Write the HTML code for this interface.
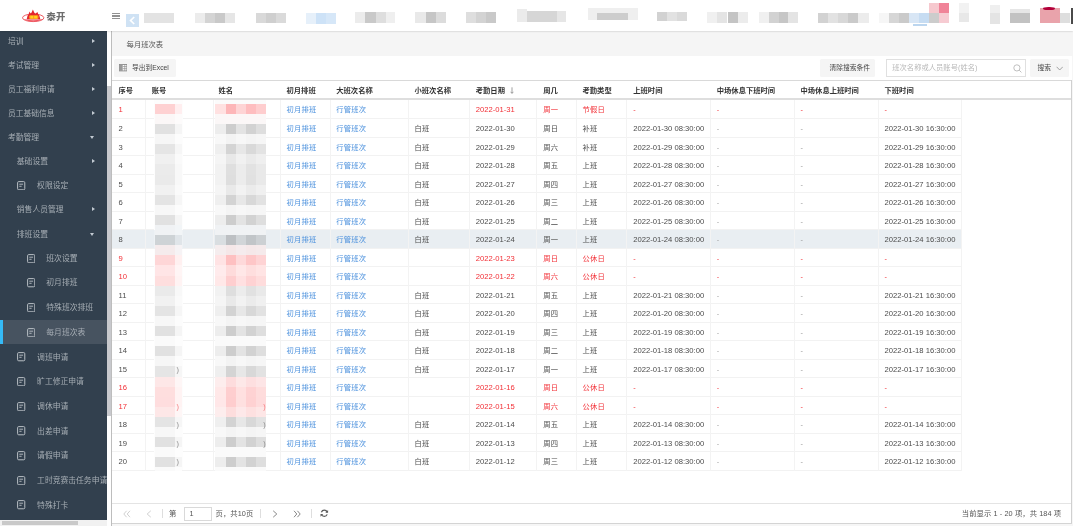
<!DOCTYPE html>
<html lang="zh-CN"><head><meta charset="utf-8"><title>每月班次表</title>
<style>
*{box-sizing:border-box;margin:0;padding:0}
html,body{width:1073px;height:526px;overflow:hidden;background:#f6f6f6;font-family:"Liberation Sans","Noto Sans CJK SC",sans-serif;}
.abs{position:absolute}
#hdr{position:absolute;left:0;top:0;width:1073px;height:31px;background:#fff;box-shadow:0 0 2px rgba(0,0,0,.25);z-index:5}
#side{position:absolute;left:0;top:31px;width:106.6px;height:488.5px;background:#32404e;overflow:hidden}
.mi{position:absolute;left:0;width:107px;height:24px;color:#a6adb4;font-size:7.8px;line-height:24px;white-space:nowrap}
.mi span{position:absolute;top:1.1px}
.mi svg{position:absolute;top:7.8px}
.ar{position:absolute;width:0;height:0}
.ar.r{left:92px;top:10.2px;border-left:3.5px solid #c2cad2;border-top:2.8px solid transparent;border-bottom:2.8px solid transparent}
.ar.d{left:90.3px;top:11.2px;border-top:3.4px solid #c2cad2;border-left:2.9px solid transparent;border-right:2.9px solid transparent}
#tabbar{position:absolute;left:112px;top:31px;width:961px;height:25px;background:#f5f5f5}
#main{position:absolute;left:111.5px;top:56px;width:960px;height:467.5px;background:#fff}
.btn{position:absolute;top:59.1px;height:17.5px;background:#f5f5f5;border-radius:1.5px;color:#464646;font-size:6.75px;line-height:18.7px;white-space:nowrap}
.th{position:absolute;top:82.2px;height:18px;line-height:18px;font-size:7.3px;font-weight:bold;color:#333;white-space:nowrap}
.row{position:absolute;left:112px;width:850px;height:18.52px;border-bottom:1px solid #f2f2f2;}
.row.hl{background:#e9eef2;width:850px}
.c{position:absolute;top:0;height:18.52px;line-height:20.3px;font-size:7.3px;color:#4c4c4c;white-space:nowrap;letter-spacing:.22px}
.c.n{font-size:7.65px;letter-spacing:0}
.red .c{color:#f22f36}
.c.lk{color:#4a90dd}
.c.ds{color:#9a9a9a}
.red .c.ds{color:#f22f36}
.vl{position:absolute;top:99.5px;width:1px;height:371.4px;background:#f3f3f3}
.pg{position:absolute;font-size:7.3px;color:#555;line-height:12px;white-space:nowrap;letter-spacing:.1px}
.bl{position:absolute}
</style></head><body><div id="all" style="position:absolute;left:0;top:0;width:1073px;height:526px;overflow:hidden;filter:blur(.35px);will-change:transform">

<div id="hdr">
<svg class="abs" style="left:21px;top:8px" width="25" height="15" viewBox="0 0 25 15">
<ellipse cx="12.2" cy="9.8" rx="10.7" ry="3.8" fill="#fff" stroke="#e8323a" stroke-width="0.8"/>
<path d="M5.6 11.6 L6.6 7.6 L7.6 6.4 L8.5 3.6 L9.6 5.6 L10.6 4.6 L11.9 1.6 L13.2 4.6 L14.4 5.8 L16.4 3.9 L17.4 6.6 L18.4 7.8 L19.4 11.6 Z" fill="#e3262d"/>
<rect x="8.2" y="7.3" width="9.2" height="3.6" rx="1" fill="#ff9d1c"/>
<rect x="9.4" y="7.9" width="2.6" height="2.4" fill="#ffd21f"/><rect x="13.2" y="7.9" width="2.8" height="2.4" fill="#ffd21f"/>
<path d="M2.6 11.4 Q12.2 15.4 21.8 11.4 L20.4 11.2 Q12.2 13.2 4 11.2 Z" fill="#ee5560"/>
</svg>
<div class="abs" style="left:46.6px;top:10.9px;font-size:9.3px;line-height:13px;font-weight:900;color:#6e6e6e;letter-spacing:0">泰开</div>
<div class="abs" style="left:112.3px;top:12.5px;width:7.5px;height:1.2px;background:#929292"></div>
<div class="abs" style="left:112.3px;top:15.4px;width:7.5px;height:1.2px;background:#929292"></div>
<div class="abs" style="left:112.3px;top:18.3px;width:7.5px;height:1.2px;background:#929292"></div>
<div class="abs" style="left:126px;top:14px;width:13px;height:13px;background:#cfe2f4"></div>
<svg class="abs" style="left:126px;top:14px" width="13" height="13" viewBox="0 0 13 13"><path d="M8.2 3 L4.6 6.5 L8.2 10" fill="none" stroke="#fff" stroke-width="1.7"/></svg>
<div style="filter:blur(.7px)">
<div class="bl" style="left:143.5px;top:12.5px;width:30.5px;height:10.0px;background:#e3e3e3;"></div>
<div class="bl" style="left:195.0px;top:12.5px;width:10.0px;height:10.0px;background:#ececec;"></div>
<div class="bl" style="left:205.0px;top:12.5px;width:10.0px;height:10.0px;background:#d4d4d4;"></div>
<div class="bl" style="left:215.0px;top:12.5px;width:10.0px;height:10.0px;background:#c9c9c9;"></div>
<div class="bl" style="left:225.0px;top:12.5px;width:10.0px;height:10.0px;background:#e6e6e6;"></div>
<div class="bl" style="left:255.5px;top:12.5px;width:10.0px;height:10.0px;background:#d9d9d9;"></div>
<div class="bl" style="left:265.5px;top:12.5px;width:10.0px;height:10.0px;background:#cfcfcf;"></div>
<div class="bl" style="left:275.5px;top:12.5px;width:10.0px;height:10.0px;background:#dadada;"></div>
<div class="bl" style="left:305.5px;top:12.5px;width:10.0px;height:11.0px;background:#e6f0fa;"></div>
<div class="bl" style="left:315.5px;top:12.5px;width:10.0px;height:11.0px;background:#cde2f7;"></div>
<div class="bl" style="left:325.5px;top:12.5px;width:10.0px;height:11.0px;background:#d6e7f8;"></div>
<div class="bl" style="left:355.0px;top:12.0px;width:10.0px;height:11.0px;background:#ececec;"></div>
<div class="bl" style="left:365.0px;top:12.0px;width:11.0px;height:11.0px;background:#c9c9c9;"></div>
<div class="bl" style="left:376.0px;top:12.0px;width:10.0px;height:11.0px;background:#dedede;"></div>
<div class="bl" style="left:386.0px;top:12.0px;width:9.0px;height:11.0px;background:#efefef;"></div>
<div class="bl" style="left:415.0px;top:12.0px;width:11.0px;height:11.0px;background:#e9e9e9;"></div>
<div class="bl" style="left:426.0px;top:12.0px;width:10.0px;height:11.0px;background:#c6c6c6;"></div>
<div class="bl" style="left:436.0px;top:12.0px;width:10.0px;height:11.0px;background:#dcdcdc;"></div>
<div class="bl" style="left:466.0px;top:12.0px;width:10.0px;height:11.0px;background:#dedede;"></div>
<div class="bl" style="left:476.0px;top:12.0px;width:10.0px;height:11.0px;background:#d3d3d3;"></div>
<div class="bl" style="left:486.0px;top:12.0px;width:10.0px;height:11.0px;background:#c9c9c9;"></div>
<div class="bl" style="left:517.0px;top:9.0px;width:10.0px;height:13.0px;background:#ebebeb;"></div>
<div class="bl" style="left:527.0px;top:11.0px;width:30.0px;height:11.0px;background:#d6d6d6;"></div>
<div class="bl" style="left:557.0px;top:11.0px;width:9.0px;height:11.0px;background:#e6e6e6;"></div>
<div class="bl" style="left:587.5px;top:8.0px;width:50.0px;height:12.0px;background:#efefef;"></div>
<div class="bl" style="left:597.0px;top:12.5px;width:30.5px;height:7.0px;background:#cdcdcd;"></div>
<div class="bl" style="left:657.0px;top:12.0px;width:10.0px;height:9.0px;background:#d2d2d2;"></div>
<div class="bl" style="left:667.0px;top:12.0px;width:10.0px;height:9.0px;background:#e2e2e2;"></div>
<div class="bl" style="left:677.0px;top:12.0px;width:10.0px;height:9.0px;background:#dadada;"></div>
<div class="bl" style="left:707.0px;top:12.0px;width:10.0px;height:11.0px;background:#f0f0f0;"></div>
<div class="bl" style="left:717.0px;top:12.0px;width:10.0px;height:11.0px;background:#e4e4e4;"></div>
<div class="bl" style="left:727.5px;top:12.0px;width:10.0px;height:11.0px;background:#c4c4c4;"></div>
<div class="bl" style="left:737.5px;top:12.0px;width:10.0px;height:11.0px;background:#ececec;"></div>
<div class="bl" style="left:759.0px;top:12.0px;width:10.0px;height:11.0px;background:#f0f0f0;"></div>
<div class="bl" style="left:769.0px;top:12.0px;width:10.0px;height:11.0px;background:#d2d2d2;"></div>
<div class="bl" style="left:779.0px;top:12.0px;width:9.0px;height:11.0px;background:#c6c6c6;"></div>
<div class="bl" style="left:788.0px;top:12.0px;width:10.0px;height:11.0px;background:#e4e4e4;"></div>
<div class="bl" style="left:817.5px;top:12.5px;width:10.0px;height:10.0px;background:#d2d2d2;"></div>
<div class="bl" style="left:827.5px;top:12.5px;width:10.0px;height:10.0px;background:#e2e2e2;"></div>
<div class="bl" style="left:837.5px;top:12.5px;width:10.0px;height:10.0px;background:#d8d8d8;"></div>
<div class="bl" style="left:847.5px;top:12.5px;width:10.0px;height:10.0px;background:#cacaca;"></div>
<div class="bl" style="left:857.5px;top:12.5px;width:11.0px;height:10.0px;background:#ececec;"></div>
<div class="bl" style="left:879.0px;top:12.5px;width:10.0px;height:10.0px;background:#f6f6f6;"></div>
<div class="bl" style="left:889.0px;top:12.5px;width:10.0px;height:10.0px;background:#d6d6d6;"></div>
<div class="bl" style="left:899.0px;top:12.5px;width:10.0px;height:10.0px;background:#cacaca;"></div>
<div class="bl" style="left:909.0px;top:12.5px;width:10.0px;height:10.0px;background:#d8e6f5;"></div>
<div class="bl" style="left:919.0px;top:12.5px;width:10.0px;height:10.0px;background:#c6dcf2;"></div>
<div class="bl" style="left:929.0px;top:2.5px;width:10.0px;height:10.0px;background:#f6c8ce;"></div>
<div class="bl" style="left:929.0px;top:12.5px;width:10.0px;height:10.0px;background:#cccccc;"></div>
<div class="bl" style="left:939.0px;top:2.5px;width:10.0px;height:10.0px;background:#f08398;"></div>
<div class="bl" style="left:939.0px;top:12.5px;width:10.0px;height:10.0px;background:#f6cbd2;"></div>
<div class="bl" style="left:913.0px;top:24.0px;width:14.0px;height:1.6px;background:#bcd6ef;"></div>
<div class="bl" style="left:959.0px;top:3.0px;width:10.0px;height:9.5px;background:#f2f2f2;"></div>
<div class="bl" style="left:959.0px;top:12.5px;width:10.0px;height:9.5px;background:#e8e8e8;"></div>
<div class="bl" style="left:989.5px;top:4.5px;width:10.0px;height:8.0px;background:#efefef;"></div>
<div class="bl" style="left:989.5px;top:12.5px;width:10.0px;height:11.0px;background:#e4e4e4;"></div>
<div class="bl" style="left:1009.5px;top:9.0px;width:20.0px;height:4.0px;background:#e6e6e6;"></div>
<div class="bl" style="left:1009.5px;top:12.5px;width:20.0px;height:10.0px;background:#c2c2c2;"></div>
<div class="bl" style="left:1039.5px;top:8.0px;width:20.0px;height:15.0px;background:#e9a3ab;"></div>
<div class="bl" style="left:1059.5px;top:12.5px;width:10.0px;height:10.0px;background:#dedede;"></div>
<div class="bl" style="left:1043px;top:6.6px;width:12px;height:3.4px;background:#b3003a;border-radius:50%"></div>
</div>
<div class="abs" style="left:1070.5px;top:7.5px;width:3px;height:16.5px;background:#4a4a4a"></div>
</div>
<div id="side">
<div class="mi" style="top:-2.6px;">
<span style="left:7.9px">培训</span>
<i class="ar r"></i>
</div>
<div class="mi" style="top:21.8px;">
<span style="left:7.9px">考试管理</span>
<i class="ar r"></i>
</div>
<div class="mi" style="top:45.9px;">
<span style="left:7.9px">员工福利申请</span>
<i class="ar r"></i>
</div>
<div class="mi" style="top:69.8px;">
<span style="left:7.9px">员工基础信息</span>
<i class="ar r"></i>
</div>
<div class="mi" style="top:93.8px;">
<span style="left:7.9px">考勤管理</span>
<i class="ar d"></i>
</div>
<div class="mi" style="top:118.1px;">
<span style="left:16.8px">基础设置</span>
<i class="ar r"></i>
</div>
<div class="mi" style="top:141.8px;">
<svg width="8.4" height="9.4" viewBox="0 0 8.4 9.4" style="left:17.2px"><rect x=".6" y=".6" width="7.2" height="8.2" rx="1.1" fill="none" stroke="#b9bfc5" stroke-width="1"/><path d="M2.3 3.2H6.1M2.3 5.3H4.6" stroke="#b9bfc5" stroke-width=".9"/></svg><span style="left:37.1px">权限设定</span>
</div>
<div class="mi" style="top:166.3px;">
<span style="left:16.8px">销售人员管理</span>
<i class="ar r"></i>
</div>
<div class="mi" style="top:190.5px;">
<span style="left:16.8px">排班设置</span>
<i class="ar d"></i>
</div>
<div class="mi" style="top:214.8px;">
<svg width="8.4" height="9.4" viewBox="0 0 8.4 9.4" style="left:26.6px"><rect x=".6" y=".6" width="7.2" height="8.2" rx="1.1" fill="none" stroke="#b9bfc5" stroke-width="1"/><path d="M2.3 3.2H6.1M2.3 5.3H4.6" stroke="#b9bfc5" stroke-width=".9"/></svg><span style="left:46.3px">班次设置</span>
</div>
<div class="mi" style="top:239.4px;">
<svg width="8.4" height="9.4" viewBox="0 0 8.4 9.4" style="left:26.6px"><rect x=".6" y=".6" width="7.2" height="8.2" rx="1.1" fill="none" stroke="#b9bfc5" stroke-width="1"/><path d="M2.3 3.2H6.1M2.3 5.3H4.6" stroke="#b9bfc5" stroke-width=".9"/></svg><span style="left:46.3px">初月排班</span>
</div>
<div class="mi" style="top:264.2px;">
<svg width="8.4" height="9.4" viewBox="0 0 8.4 9.4" style="left:26.6px"><rect x=".6" y=".6" width="7.2" height="8.2" rx="1.1" fill="none" stroke="#b9bfc5" stroke-width="1"/><path d="M2.3 3.2H6.1M2.3 5.3H4.6" stroke="#b9bfc5" stroke-width=".9"/></svg><span style="left:46.3px">特殊班次排班</span>
</div>
<div class="mi" style="top:288.9px;background:#475360;">
<div class="abs" style="left:0;top:0;width:2.5px;height:24px;background:#35baf6"></div>
<svg width="8.4" height="9.4" viewBox="0 0 8.4 9.4" style="left:26.6px"><rect x=".6" y=".6" width="7.2" height="8.2" rx="1.1" fill="none" stroke="#b9bfc5" stroke-width="1"/><path d="M2.3 3.2H6.1M2.3 5.3H4.6" stroke="#b9bfc5" stroke-width=".9"/></svg><span style="left:46.3px">每月班次表</span>
</div>
<div class="mi" style="top:313.6px;">
<svg width="8.4" height="9.4" viewBox="0 0 8.4 9.4" style="left:17.2px"><rect x=".6" y=".6" width="7.2" height="8.2" rx="1.1" fill="none" stroke="#b9bfc5" stroke-width="1"/><path d="M2.3 3.2H6.1M2.3 5.3H4.6" stroke="#b9bfc5" stroke-width=".9"/></svg><span style="left:37.1px">调班申请</span>
</div>
<div class="mi" style="top:338.3px;">
<svg width="8.4" height="9.4" viewBox="0 0 8.4 9.4" style="left:17.2px"><rect x=".6" y=".6" width="7.2" height="8.2" rx="1.1" fill="none" stroke="#b9bfc5" stroke-width="1"/><path d="M2.3 3.2H6.1M2.3 5.3H4.6" stroke="#b9bfc5" stroke-width=".9"/></svg><span style="left:37.1px">旷工修正申请</span>
</div>
<div class="mi" style="top:363.0px;">
<svg width="8.4" height="9.4" viewBox="0 0 8.4 9.4" style="left:17.2px"><rect x=".6" y=".6" width="7.2" height="8.2" rx="1.1" fill="none" stroke="#b9bfc5" stroke-width="1"/><path d="M2.3 3.2H6.1M2.3 5.3H4.6" stroke="#b9bfc5" stroke-width=".9"/></svg><span style="left:37.1px">调休申请</span>
</div>
<div class="mi" style="top:387.7px;">
<svg width="8.4" height="9.4" viewBox="0 0 8.4 9.4" style="left:17.2px"><rect x=".6" y=".6" width="7.2" height="8.2" rx="1.1" fill="none" stroke="#b9bfc5" stroke-width="1"/><path d="M2.3 3.2H6.1M2.3 5.3H4.6" stroke="#b9bfc5" stroke-width=".9"/></svg><span style="left:37.1px">出差申请</span>
</div>
<div class="mi" style="top:412.4px;">
<svg width="8.4" height="9.4" viewBox="0 0 8.4 9.4" style="left:17.2px"><rect x=".6" y=".6" width="7.2" height="8.2" rx="1.1" fill="none" stroke="#b9bfc5" stroke-width="1"/><path d="M2.3 3.2H6.1M2.3 5.3H4.6" stroke="#b9bfc5" stroke-width=".9"/></svg><span style="left:37.1px">请假申请</span>
</div>
<div class="mi" style="top:437.1px;">
<svg width="8.4" height="9.4" viewBox="0 0 8.4 9.4" style="left:17.2px"><rect x=".6" y=".6" width="7.2" height="8.2" rx="1.1" fill="none" stroke="#b9bfc5" stroke-width="1"/><path d="M2.3 3.2H6.1M2.3 5.3H4.6" stroke="#b9bfc5" stroke-width=".9"/></svg><span style="left:37.1px">工时竞赛击任务申请</span>
</div>
<div class="mi" style="top:461.5px;">
<svg width="8.4" height="9.4" viewBox="0 0 8.4 9.4" style="left:17.2px"><rect x=".6" y=".6" width="7.2" height="8.2" rx="1.1" fill="none" stroke="#b9bfc5" stroke-width="1"/><path d="M2.3 3.2H6.1M2.3 5.3H4.6" stroke="#b9bfc5" stroke-width=".9"/></svg><span style="left:37.1px">特殊打卡</span>
</div>
</div>
<div class="abs" style="left:106.6px;top:31px;width:4.8px;height:495px;background:#fefefe"></div>
<div class="abs" style="left:106.6px;top:86px;width:4.5px;height:329.5px;background:#c8c9cd"></div>
<div class="abs" style="left:0;top:519.5px;width:107px;height:6.5px;background:#f1f1f1"></div>
<div class="abs" style="left:2px;top:521px;width:76px;height:4px;background:#c9c9c9"></div>
<div class="abs" style="left:111px;top:31px;width:.9px;height:495px;background:#bdbdbd"></div>
<div id="tabbar"><div class="abs" style="left:14.6px;top:7px;font-size:7.3px;line-height:13px;color:#555;white-space:nowrap">每月班次表</div></div>
<div id="main"></div>
<div class="btn" style="left:114px;width:61.7px">
<svg class="abs" style="left:4.6px;top:5.2px" width="8.4" height="7.6" viewBox="0 0 8.4 7.6"><rect x=".5" y=".5" width="7.4" height="6.4" fill="#fff" stroke="#8a8a8a" stroke-width=".9"/><rect x=".5" y=".5" width="3.2" height="6.4" fill="#9a9a9a"/><path d="M3.7 2.6H7.9M3.7 4.7H7.9M5.8 .5V6.9" stroke="#8a8a8a" stroke-width=".7"/></svg>
<span class="abs" style="left:18px;top:0">导出到Excel</span></div>
<div class="btn" style="left:820.3px;width:54.8px"><span class="abs" style="left:9.2px;top:0">清除搜索条件</span></div>
<div class="abs" style="left:885.9px;top:59.1px;width:140.2px;height:17.6px;background:#fff;border:1px solid #e0e0e0;font-size:7.3px;line-height:16.4px;color:#b8b8b8;white-space:nowrap"><span class="abs" style="left:5.4px;top:0">班次名称或人员账号(姓名)</span>
<svg class="abs" style="left:126.2px;top:3.6px" width="9" height="9" viewBox="0 0 9 9"><circle cx="3.9" cy="3.9" r="3.1" fill="none" stroke="#b0b0b0" stroke-width=".8"/><path d="M6.2 6.2L8.4 8.4" stroke="#b0b0b0" stroke-width=".8"/></svg></div>
<div class="btn" style="left:1030.2px;width:38.5px"><span class="abs" style="left:7.2px;top:0">搜索</span><svg class="abs" style="left:25.6px;top:6.6px" width="7.4" height="5" viewBox="0 0 7.4 5"><path d="M.6 .8L3.7 4L6.8 .8" fill="none" stroke="#8c8c8c" stroke-width=".8"/></svg></div>
<div class="abs" style="left:112px;top:79.5px;width:959.6px;height:1.2px;background:#d9d9d9"></div>
<div class="abs" style="left:112px;top:97.9px;width:959.6px;height:1.8px;background:#dedede"></div>
<div class="th" style="left:118.50px">序号</div>
<div class="th" style="left:151.75px">账号</div>
<div class="th" style="left:218.50px">姓名</div>
<div class="th" style="left:286.50px">初月排班</div>
<div class="th" style="left:336.25px">大班次名称</div>
<div class="th" style="left:414.50px">小班次名称</div>
<div class="th" style="left:475.75px">考勤日期</div>
<div class="th" style="left:543.25px">周几</div>
<div class="th" style="left:582.50px">考勤类型</div>
<div class="th" style="left:633.25px">上班时间</div>
<div class="th" style="left:716.75px">中场休息下班时间</div>
<div class="th" style="left:800.50px">中场休息上班时间</div>
<div class="th" style="left:884.50px">下班时间</div>
<svg class="abs" style="left:509.7px;top:86.6px" width="4" height="7" viewBox="0 0 4 7"><path d="M2 .3V6.2M.6 4.8L2 6.4L3.4 4.8" fill="none" stroke="#8f8f8f" stroke-width=".85"/></svg>
<div class="row red" style="top:100.48px">
<div class="c n" style="left:6.50px">1</div>
<div class="c lk" style="left:174.50px">初月排班</div>
<div class="c lk" style="left:224.25px">行管班次</div>
<div class="c n" style="left:363.75px">2022-01-31</div>
<div class="c" style="left:431.25px">周一</div>
<div class="c" style="left:470.50px">节假日</div>
<div class="c ds" style="left:521.25px">-</div>
<div class="c ds" style="left:604.75px">-</div>
<div class="c ds" style="left:688.50px">-</div>
<div class="c ds" style="left:772.50px">-</div>
</div>
<div class="row" style="top:119.00px">
<div class="c n" style="left:6.50px">2</div>
<div class="c lk" style="left:174.50px">初月排班</div>
<div class="c lk" style="left:224.25px">行管班次</div>
<div class="c" style="left:302.50px">白班</div>
<div class="c n" style="left:363.75px">2022-01-30</div>
<div class="c" style="left:431.25px">周日</div>
<div class="c" style="left:470.50px">补班</div>
<div class="c n" style="left:521.25px">2022-01-30 08:30:00</div>
<div class="c ds" style="left:604.75px">-</div>
<div class="c ds" style="left:688.50px">-</div>
<div class="c n" style="left:772.50px">2022-01-30 16:30:00</div>
</div>
<div class="row" style="top:137.52px">
<div class="c n" style="left:6.50px">3</div>
<div class="c lk" style="left:174.50px">初月排班</div>
<div class="c lk" style="left:224.25px">行管班次</div>
<div class="c" style="left:302.50px">白班</div>
<div class="c n" style="left:363.75px">2022-01-29</div>
<div class="c" style="left:431.25px">周六</div>
<div class="c" style="left:470.50px">补班</div>
<div class="c n" style="left:521.25px">2022-01-29 08:30:00</div>
<div class="c ds" style="left:604.75px">-</div>
<div class="c ds" style="left:688.50px">-</div>
<div class="c n" style="left:772.50px">2022-01-29 16:30:00</div>
</div>
<div class="row" style="top:156.04px">
<div class="c n" style="left:6.50px">4</div>
<div class="c lk" style="left:174.50px">初月排班</div>
<div class="c lk" style="left:224.25px">行管班次</div>
<div class="c" style="left:302.50px">白班</div>
<div class="c n" style="left:363.75px">2022-01-28</div>
<div class="c" style="left:431.25px">周五</div>
<div class="c" style="left:470.50px">上班</div>
<div class="c n" style="left:521.25px">2022-01-28 08:30:00</div>
<div class="c ds" style="left:604.75px">-</div>
<div class="c ds" style="left:688.50px">-</div>
<div class="c n" style="left:772.50px">2022-01-28 16:30:00</div>
</div>
<div class="row" style="top:174.56px">
<div class="c n" style="left:6.50px">5</div>
<div class="c lk" style="left:174.50px">初月排班</div>
<div class="c lk" style="left:224.25px">行管班次</div>
<div class="c" style="left:302.50px">白班</div>
<div class="c n" style="left:363.75px">2022-01-27</div>
<div class="c" style="left:431.25px">周四</div>
<div class="c" style="left:470.50px">上班</div>
<div class="c n" style="left:521.25px">2022-01-27 08:30:00</div>
<div class="c ds" style="left:604.75px">-</div>
<div class="c ds" style="left:688.50px">-</div>
<div class="c n" style="left:772.50px">2022-01-27 16:30:00</div>
</div>
<div class="row" style="top:193.08px">
<div class="c n" style="left:6.50px">6</div>
<div class="c lk" style="left:174.50px">初月排班</div>
<div class="c lk" style="left:224.25px">行管班次</div>
<div class="c" style="left:302.50px">白班</div>
<div class="c n" style="left:363.75px">2022-01-26</div>
<div class="c" style="left:431.25px">周三</div>
<div class="c" style="left:470.50px">上班</div>
<div class="c n" style="left:521.25px">2022-01-26 08:30:00</div>
<div class="c ds" style="left:604.75px">-</div>
<div class="c ds" style="left:688.50px">-</div>
<div class="c n" style="left:772.50px">2022-01-26 16:30:00</div>
</div>
<div class="row" style="top:211.60px">
<div class="c n" style="left:6.50px">7</div>
<div class="c lk" style="left:174.50px">初月排班</div>
<div class="c lk" style="left:224.25px">行管班次</div>
<div class="c" style="left:302.50px">白班</div>
<div class="c n" style="left:363.75px">2022-01-25</div>
<div class="c" style="left:431.25px">周二</div>
<div class="c" style="left:470.50px">上班</div>
<div class="c n" style="left:521.25px">2022-01-25 08:30:00</div>
<div class="c ds" style="left:604.75px">-</div>
<div class="c ds" style="left:688.50px">-</div>
<div class="c n" style="left:772.50px">2022-01-25 16:30:00</div>
</div>
<div class="row hl" style="top:230.12px">
<div class="c n" style="left:6.50px">8</div>
<div class="c lk" style="left:174.50px">初月排班</div>
<div class="c lk" style="left:224.25px">行管班次</div>
<div class="c" style="left:302.50px">白班</div>
<div class="c n" style="left:363.75px">2022-01-24</div>
<div class="c" style="left:431.25px">周一</div>
<div class="c" style="left:470.50px">上班</div>
<div class="c n" style="left:521.25px">2022-01-24 08:30:00</div>
<div class="c ds" style="left:604.75px">-</div>
<div class="c ds" style="left:688.50px">-</div>
<div class="c n" style="left:772.50px">2022-01-24 16:30:00</div>
</div>
<div class="row red" style="top:248.64px">
<div class="c n" style="left:6.50px">9</div>
<div class="c lk" style="left:174.50px">初月排班</div>
<div class="c lk" style="left:224.25px">行管班次</div>
<div class="c n" style="left:363.75px">2022-01-23</div>
<div class="c" style="left:431.25px">周日</div>
<div class="c" style="left:470.50px">公休日</div>
<div class="c ds" style="left:521.25px">-</div>
<div class="c ds" style="left:604.75px">-</div>
<div class="c ds" style="left:688.50px">-</div>
<div class="c ds" style="left:772.50px">-</div>
</div>
<div class="row red" style="top:267.16px">
<div class="c n" style="left:6.50px">10</div>
<div class="c lk" style="left:174.50px">初月排班</div>
<div class="c lk" style="left:224.25px">行管班次</div>
<div class="c n" style="left:363.75px">2022-01-22</div>
<div class="c" style="left:431.25px">周六</div>
<div class="c" style="left:470.50px">公休日</div>
<div class="c ds" style="left:521.25px">-</div>
<div class="c ds" style="left:604.75px">-</div>
<div class="c ds" style="left:688.50px">-</div>
<div class="c ds" style="left:772.50px">-</div>
</div>
<div class="row" style="top:285.68px">
<div class="c n" style="left:6.50px">11</div>
<div class="c lk" style="left:174.50px">初月排班</div>
<div class="c lk" style="left:224.25px">行管班次</div>
<div class="c" style="left:302.50px">白班</div>
<div class="c n" style="left:363.75px">2022-01-21</div>
<div class="c" style="left:431.25px">周五</div>
<div class="c" style="left:470.50px">上班</div>
<div class="c n" style="left:521.25px">2022-01-21 08:30:00</div>
<div class="c ds" style="left:604.75px">-</div>
<div class="c ds" style="left:688.50px">-</div>
<div class="c n" style="left:772.50px">2022-01-21 16:30:00</div>
</div>
<div class="row" style="top:304.20px">
<div class="c n" style="left:6.50px">12</div>
<div class="c lk" style="left:174.50px">初月排班</div>
<div class="c lk" style="left:224.25px">行管班次</div>
<div class="c" style="left:302.50px">白班</div>
<div class="c n" style="left:363.75px">2022-01-20</div>
<div class="c" style="left:431.25px">周四</div>
<div class="c" style="left:470.50px">上班</div>
<div class="c n" style="left:521.25px">2022-01-20 08:30:00</div>
<div class="c ds" style="left:604.75px">-</div>
<div class="c ds" style="left:688.50px">-</div>
<div class="c n" style="left:772.50px">2022-01-20 16:30:00</div>
</div>
<div class="row" style="top:322.72px">
<div class="c n" style="left:6.50px">13</div>
<div class="c lk" style="left:174.50px">初月排班</div>
<div class="c lk" style="left:224.25px">行管班次</div>
<div class="c" style="left:302.50px">白班</div>
<div class="c n" style="left:363.75px">2022-01-19</div>
<div class="c" style="left:431.25px">周三</div>
<div class="c" style="left:470.50px">上班</div>
<div class="c n" style="left:521.25px">2022-01-19 08:30:00</div>
<div class="c ds" style="left:604.75px">-</div>
<div class="c ds" style="left:688.50px">-</div>
<div class="c n" style="left:772.50px">2022-01-19 16:30:00</div>
</div>
<div class="row" style="top:341.24px">
<div class="c n" style="left:6.50px">14</div>
<div class="c lk" style="left:174.50px">初月排班</div>
<div class="c lk" style="left:224.25px">行管班次</div>
<div class="c" style="left:302.50px">白班</div>
<div class="c n" style="left:363.75px">2022-01-18</div>
<div class="c" style="left:431.25px">周二</div>
<div class="c" style="left:470.50px">上班</div>
<div class="c n" style="left:521.25px">2022-01-18 08:30:00</div>
<div class="c ds" style="left:604.75px">-</div>
<div class="c ds" style="left:688.50px">-</div>
<div class="c n" style="left:772.50px">2022-01-18 16:30:00</div>
</div>
<div class="row" style="top:359.76px">
<div class="c n" style="left:6.50px">15</div>
<div class="c lk" style="left:174.50px">初月排班</div>
<div class="c lk" style="left:224.25px">行管班次</div>
<div class="c" style="left:302.50px">白班</div>
<div class="c n" style="left:363.75px">2022-01-17</div>
<div class="c" style="left:431.25px">周一</div>
<div class="c" style="left:470.50px">上班</div>
<div class="c n" style="left:521.25px">2022-01-17 08:30:00</div>
<div class="c ds" style="left:604.75px">-</div>
<div class="c ds" style="left:688.50px">-</div>
<div class="c n" style="left:772.50px">2022-01-17 16:30:00</div>
</div>
<div class="row red" style="top:378.28px">
<div class="c n" style="left:6.50px">16</div>
<div class="c lk" style="left:174.50px">初月排班</div>
<div class="c lk" style="left:224.25px">行管班次</div>
<div class="c n" style="left:363.75px">2022-01-16</div>
<div class="c" style="left:431.25px">周日</div>
<div class="c" style="left:470.50px">公休日</div>
<div class="c ds" style="left:521.25px">-</div>
<div class="c ds" style="left:604.75px">-</div>
<div class="c ds" style="left:688.50px">-</div>
<div class="c ds" style="left:772.50px">-</div>
</div>
<div class="row red" style="top:396.80px">
<div class="c n" style="left:6.50px">17</div>
<div class="c lk" style="left:174.50px">初月排班</div>
<div class="c lk" style="left:224.25px">行管班次</div>
<div class="c n" style="left:363.75px">2022-01-15</div>
<div class="c" style="left:431.25px">周六</div>
<div class="c" style="left:470.50px">公休日</div>
<div class="c ds" style="left:521.25px">-</div>
<div class="c ds" style="left:604.75px">-</div>
<div class="c ds" style="left:688.50px">-</div>
<div class="c ds" style="left:772.50px">-</div>
</div>
<div class="row" style="top:415.32px">
<div class="c n" style="left:6.50px">18</div>
<div class="c lk" style="left:174.50px">初月排班</div>
<div class="c lk" style="left:224.25px">行管班次</div>
<div class="c" style="left:302.50px">白班</div>
<div class="c n" style="left:363.75px">2022-01-14</div>
<div class="c" style="left:431.25px">周五</div>
<div class="c" style="left:470.50px">上班</div>
<div class="c n" style="left:521.25px">2022-01-14 08:30:00</div>
<div class="c ds" style="left:604.75px">-</div>
<div class="c ds" style="left:688.50px">-</div>
<div class="c n" style="left:772.50px">2022-01-14 16:30:00</div>
</div>
<div class="row" style="top:433.84px">
<div class="c n" style="left:6.50px">19</div>
<div class="c lk" style="left:174.50px">初月排班</div>
<div class="c lk" style="left:224.25px">行管班次</div>
<div class="c" style="left:302.50px">白班</div>
<div class="c n" style="left:363.75px">2022-01-13</div>
<div class="c" style="left:431.25px">周四</div>
<div class="c" style="left:470.50px">上班</div>
<div class="c n" style="left:521.25px">2022-01-13 08:30:00</div>
<div class="c ds" style="left:604.75px">-</div>
<div class="c ds" style="left:688.50px">-</div>
<div class="c n" style="left:772.50px">2022-01-13 16:30:00</div>
</div>
<div class="row" style="top:452.36px">
<div class="c n" style="left:6.50px">20</div>
<div class="c lk" style="left:174.50px">初月排班</div>
<div class="c lk" style="left:224.25px">行管班次</div>
<div class="c" style="left:302.50px">白班</div>
<div class="c n" style="left:363.75px">2022-01-12</div>
<div class="c" style="left:431.25px">周三</div>
<div class="c" style="left:470.50px">上班</div>
<div class="c n" style="left:521.25px">2022-01-12 08:30:00</div>
<div class="c ds" style="left:604.75px">-</div>
<div class="c ds" style="left:688.50px">-</div>
<div class="c n" style="left:772.50px">2022-01-12 16:30:00</div>
</div>
<div class="vl" style="left:144.6px"></div>
<div class="vl" style="left:212.6px"></div>
<div class="vl" style="left:279.6px"></div>
<div class="vl" style="left:329.6px"></div>
<div class="vl" style="left:408.1px"></div>
<div class="vl" style="left:468.6px"></div>
<div class="vl" style="left:536.1px"></div>
<div class="vl" style="left:576.1px"></div>
<div class="vl" style="left:625.6px"></div>
<div class="vl" style="left:709.6px"></div>
<div class="vl" style="left:793.6px"></div>
<div class="vl" style="left:877.6px"></div>
<div class="vl" style="left:960.6px"></div>
<div style="filter:blur(.5px)">
<div class="bl" style="left:153.8px;top:100.3px;width:29.5px;height:369.8px;background:#fdfdfd;"></div>
<div class="bl" style="left:214.9px;top:100.3px;width:51.6px;height:369.8px;background:#fbfbfb;"></div>
<div class="bl" style="left:153.8px;top:230.1px;width:29.5px;height:18.5px;background:#eef2f5;"></div>
<div class="bl" style="left:214.9px;top:230.1px;width:51.6px;height:18.5px;background:#edf1f4;"></div>
<div class="bl" style="left:154.8px;top:103.8px;width:10.5px;height:10.5px;background:#fed1d2;"></div>
<div class="bl" style="left:164.9px;top:103.8px;width:10.5px;height:10.5px;background:#fed1d2;"></div>
<div class="bl" style="left:175.0px;top:103.8px;width:6.9px;height:10.5px;background:#ffeeef;"></div>
<div class="bl" style="left:215.4px;top:103.8px;width:10.5px;height:10.5px;background:#ffe1e1;"></div>
<div class="bl" style="left:225.5px;top:103.8px;width:10.5px;height:10.5px;background:#fdb6b8;"></div>
<div class="bl" style="left:235.6px;top:103.8px;width:10.5px;height:10.5px;background:#fed4d5;"></div>
<div class="bl" style="left:245.7px;top:103.8px;width:10.5px;height:10.5px;background:#febdbf;"></div>
<div class="bl" style="left:255.8px;top:103.8px;width:10.2px;height:10.5px;background:#fecdce;"></div>
<div class="bl" style="left:154.8px;top:113.9px;width:10.5px;height:10.5px;background:#fbf7f7;"></div>
<div class="bl" style="left:164.9px;top:113.9px;width:10.5px;height:10.5px;background:#fbf7f7;"></div>
<div class="bl" style="left:175.0px;top:113.9px;width:6.9px;height:10.5px;background:#fdfbfb;"></div>
<div class="bl" style="left:215.4px;top:113.9px;width:10.5px;height:10.5px;background:#fbf7f7;"></div>
<div class="bl" style="left:225.5px;top:113.9px;width:10.5px;height:10.5px;background:#fbf7f7;"></div>
<div class="bl" style="left:235.6px;top:113.9px;width:10.5px;height:10.5px;background:#fbf7f7;"></div>
<div class="bl" style="left:245.7px;top:113.9px;width:10.5px;height:10.5px;background:#fbf7f7;"></div>
<div class="bl" style="left:255.8px;top:113.9px;width:10.2px;height:10.5px;background:#fbf7f7;"></div>
<div class="bl" style="left:154.8px;top:124.0px;width:10.5px;height:10.5px;background:#e1e1e1;"></div>
<div class="bl" style="left:164.9px;top:124.0px;width:10.5px;height:10.5px;background:#e1e1e1;"></div>
<div class="bl" style="left:175.0px;top:124.0px;width:6.9px;height:10.5px;background:#f5f5f5;"></div>
<div class="bl" style="left:215.4px;top:124.0px;width:10.5px;height:10.5px;background:#ededed;"></div>
<div class="bl" style="left:225.5px;top:124.0px;width:10.5px;height:10.5px;background:#cdcdcd;"></div>
<div class="bl" style="left:235.6px;top:124.0px;width:10.5px;height:10.5px;background:#e3e3e3;"></div>
<div class="bl" style="left:245.7px;top:124.0px;width:10.5px;height:10.5px;background:#d2d2d2;"></div>
<div class="bl" style="left:255.8px;top:124.0px;width:10.2px;height:10.5px;background:#dedede;"></div>
<div class="bl" style="left:154.8px;top:134.1px;width:10.5px;height:10.5px;background:#f6f6f6;"></div>
<div class="bl" style="left:164.9px;top:134.1px;width:10.5px;height:10.5px;background:#f6f6f6;"></div>
<div class="bl" style="left:175.0px;top:134.1px;width:6.9px;height:10.5px;background:#fcfcfc;"></div>
<div class="bl" style="left:215.4px;top:134.1px;width:10.5px;height:10.5px;background:#f8f8f8;"></div>
<div class="bl" style="left:225.5px;top:134.1px;width:10.5px;height:10.5px;background:#f3f3f3;"></div>
<div class="bl" style="left:235.6px;top:134.1px;width:10.5px;height:10.5px;background:#f7f7f7;"></div>
<div class="bl" style="left:245.7px;top:134.1px;width:10.5px;height:10.5px;background:#f4f4f4;"></div>
<div class="bl" style="left:255.8px;top:134.1px;width:10.2px;height:10.5px;background:#f6f6f6;"></div>
<div class="bl" style="left:154.8px;top:144.2px;width:10.5px;height:10.5px;background:#e5e5e5;"></div>
<div class="bl" style="left:164.9px;top:144.2px;width:10.5px;height:10.5px;background:#e5e5e5;"></div>
<div class="bl" style="left:175.0px;top:144.2px;width:6.9px;height:10.5px;background:#f6f6f6;"></div>
<div class="bl" style="left:215.4px;top:144.2px;width:10.5px;height:10.5px;background:#efefef;"></div>
<div class="bl" style="left:225.5px;top:144.2px;width:10.5px;height:10.5px;background:#d4d4d4;"></div>
<div class="bl" style="left:235.6px;top:144.2px;width:10.5px;height:10.5px;background:#e7e7e7;"></div>
<div class="bl" style="left:245.7px;top:144.2px;width:10.5px;height:10.5px;background:#d9d9d9;"></div>
<div class="bl" style="left:255.8px;top:144.2px;width:10.2px;height:10.5px;background:#e3e3e3;"></div>
<div class="bl" style="left:154.8px;top:154.3px;width:10.5px;height:10.5px;background:#f0f0f0;"></div>
<div class="bl" style="left:164.9px;top:154.3px;width:10.5px;height:10.5px;background:#f0f0f0;"></div>
<div class="bl" style="left:175.0px;top:154.3px;width:6.9px;height:10.5px;background:#fafafa;"></div>
<div class="bl" style="left:215.4px;top:154.3px;width:10.5px;height:10.5px;background:#f5f5f5;"></div>
<div class="bl" style="left:225.5px;top:154.3px;width:10.5px;height:10.5px;background:#e8e8e8;"></div>
<div class="bl" style="left:235.6px;top:154.3px;width:10.5px;height:10.5px;background:#f1f1f1;"></div>
<div class="bl" style="left:245.7px;top:154.3px;width:10.5px;height:10.5px;background:#eaeaea;"></div>
<div class="bl" style="left:255.8px;top:154.3px;width:10.2px;height:10.5px;background:#efefef;"></div>
<div class="bl" style="left:154.8px;top:164.4px;width:10.5px;height:10.5px;background:#ebebeb;"></div>
<div class="bl" style="left:164.9px;top:164.4px;width:10.5px;height:10.5px;background:#ebebeb;"></div>
<div class="bl" style="left:175.0px;top:164.4px;width:6.9px;height:10.5px;background:#f8f8f8;"></div>
<div class="bl" style="left:215.4px;top:164.4px;width:10.5px;height:10.5px;background:#f2f2f2;"></div>
<div class="bl" style="left:225.5px;top:164.4px;width:10.5px;height:10.5px;background:#dfdfdf;"></div>
<div class="bl" style="left:235.6px;top:164.4px;width:10.5px;height:10.5px;background:#ececec;"></div>
<div class="bl" style="left:245.7px;top:164.4px;width:10.5px;height:10.5px;background:#e2e2e2;"></div>
<div class="bl" style="left:255.8px;top:164.4px;width:10.2px;height:10.5px;background:#e9e9e9;"></div>
<div class="bl" style="left:154.8px;top:174.5px;width:10.5px;height:10.5px;background:#eaeaea;"></div>
<div class="bl" style="left:164.9px;top:174.5px;width:10.5px;height:10.5px;background:#eaeaea;"></div>
<div class="bl" style="left:175.0px;top:174.5px;width:6.9px;height:10.5px;background:#f8f8f8;"></div>
<div class="bl" style="left:215.4px;top:174.5px;width:10.5px;height:10.5px;background:#f2f2f2;"></div>
<div class="bl" style="left:225.5px;top:174.5px;width:10.5px;height:10.5px;background:#dedede;"></div>
<div class="bl" style="left:235.6px;top:174.5px;width:10.5px;height:10.5px;background:#ececec;"></div>
<div class="bl" style="left:245.7px;top:174.5px;width:10.5px;height:10.5px;background:#e1e1e1;"></div>
<div class="bl" style="left:255.8px;top:174.5px;width:10.2px;height:10.5px;background:#e9e9e9;"></div>
<div class="bl" style="left:154.8px;top:184.6px;width:10.5px;height:10.5px;background:#f1f1f1;"></div>
<div class="bl" style="left:164.9px;top:184.6px;width:10.5px;height:10.5px;background:#f1f1f1;"></div>
<div class="bl" style="left:175.0px;top:184.6px;width:6.9px;height:10.5px;background:#fafafa;"></div>
<div class="bl" style="left:215.4px;top:184.6px;width:10.5px;height:10.5px;background:#f5f5f5;"></div>
<div class="bl" style="left:225.5px;top:184.6px;width:10.5px;height:10.5px;background:#e9e9e9;"></div>
<div class="bl" style="left:235.6px;top:184.6px;width:10.5px;height:10.5px;background:#f2f2f2;"></div>
<div class="bl" style="left:245.7px;top:184.6px;width:10.5px;height:10.5px;background:#ebebeb;"></div>
<div class="bl" style="left:255.8px;top:184.6px;width:10.2px;height:10.5px;background:#f0f0f0;"></div>
<div class="bl" style="left:154.8px;top:194.7px;width:10.5px;height:10.5px;background:#e4e4e4;"></div>
<div class="bl" style="left:164.9px;top:194.7px;width:10.5px;height:10.5px;background:#e4e4e4;"></div>
<div class="bl" style="left:175.0px;top:194.7px;width:6.9px;height:10.5px;background:#f6f6f6;"></div>
<div class="bl" style="left:215.4px;top:194.7px;width:10.5px;height:10.5px;background:#efefef;"></div>
<div class="bl" style="left:225.5px;top:194.7px;width:10.5px;height:10.5px;background:#d3d3d3;"></div>
<div class="bl" style="left:235.6px;top:194.7px;width:10.5px;height:10.5px;background:#e7e7e7;"></div>
<div class="bl" style="left:245.7px;top:194.7px;width:10.5px;height:10.5px;background:#d8d8d8;"></div>
<div class="bl" style="left:255.8px;top:194.7px;width:10.2px;height:10.5px;background:#e2e2e2;"></div>
<div class="bl" style="left:154.8px;top:204.8px;width:10.5px;height:10.5px;background:#f7f7f7;"></div>
<div class="bl" style="left:164.9px;top:204.8px;width:10.5px;height:10.5px;background:#f7f7f7;"></div>
<div class="bl" style="left:175.0px;top:204.8px;width:6.9px;height:10.5px;background:#fcfcfc;"></div>
<div class="bl" style="left:215.4px;top:204.8px;width:10.5px;height:10.5px;background:#f8f8f8;"></div>
<div class="bl" style="left:225.5px;top:204.8px;width:10.5px;height:10.5px;background:#f4f4f4;"></div>
<div class="bl" style="left:235.6px;top:204.8px;width:10.5px;height:10.5px;background:#f7f7f7;"></div>
<div class="bl" style="left:245.7px;top:204.8px;width:10.5px;height:10.5px;background:#f5f5f5;"></div>
<div class="bl" style="left:255.8px;top:204.8px;width:10.2px;height:10.5px;background:#f6f6f6;"></div>
<div class="bl" style="left:154.8px;top:214.9px;width:10.5px;height:10.5px;background:#e1e1e1;"></div>
<div class="bl" style="left:164.9px;top:214.9px;width:10.5px;height:10.5px;background:#e1e1e1;"></div>
<div class="bl" style="left:175.0px;top:214.9px;width:6.9px;height:10.5px;background:#f5f5f5;"></div>
<div class="bl" style="left:215.4px;top:214.9px;width:10.5px;height:10.5px;background:#ededed;"></div>
<div class="bl" style="left:225.5px;top:214.9px;width:10.5px;height:10.5px;background:#cdcdcd;"></div>
<div class="bl" style="left:235.6px;top:214.9px;width:10.5px;height:10.5px;background:#e3e3e3;"></div>
<div class="bl" style="left:245.7px;top:214.9px;width:10.5px;height:10.5px;background:#d2d2d2;"></div>
<div class="bl" style="left:255.8px;top:214.9px;width:10.2px;height:10.5px;background:#dedede;"></div>
<div class="bl" style="left:154.8px;top:225.0px;width:10.5px;height:10.5px;background:#f0f2f4;"></div>
<div class="bl" style="left:164.9px;top:225.0px;width:10.5px;height:10.5px;background:#f0f2f4;"></div>
<div class="bl" style="left:175.0px;top:225.0px;width:6.9px;height:10.5px;background:#f2f5f7;"></div>
<div class="bl" style="left:215.4px;top:225.0px;width:10.5px;height:10.5px;background:#f0f2f4;"></div>
<div class="bl" style="left:225.5px;top:225.0px;width:10.5px;height:10.5px;background:#f0f2f4;"></div>
<div class="bl" style="left:235.6px;top:225.0px;width:10.5px;height:10.5px;background:#f0f2f4;"></div>
<div class="bl" style="left:245.7px;top:225.0px;width:10.5px;height:10.5px;background:#f0f2f4;"></div>
<div class="bl" style="left:255.8px;top:225.0px;width:10.2px;height:10.5px;background:#f0f2f4;"></div>
<div class="bl" style="left:154.8px;top:235.1px;width:10.5px;height:10.5px;background:#ced3d6;"></div>
<div class="bl" style="left:164.9px;top:235.1px;width:10.5px;height:10.5px;background:#ced3d6;"></div>
<div class="bl" style="left:175.0px;top:235.1px;width:6.9px;height:10.5px;background:#e0e5e9;"></div>
<div class="bl" style="left:215.4px;top:235.1px;width:10.5px;height:10.5px;background:#d9dee1;"></div>
<div class="bl" style="left:225.5px;top:235.1px;width:10.5px;height:10.5px;background:#bdc0c3;"></div>
<div class="bl" style="left:235.6px;top:235.1px;width:10.5px;height:10.5px;background:#d1d5d8;"></div>
<div class="bl" style="left:245.7px;top:235.1px;width:10.5px;height:10.5px;background:#c1c5c8;"></div>
<div class="bl" style="left:255.8px;top:235.1px;width:10.2px;height:10.5px;background:#ccd0d3;"></div>
<div class="bl" style="left:154.8px;top:245.2px;width:10.5px;height:10.5px;background:#f5ebec;"></div>
<div class="bl" style="left:164.9px;top:245.2px;width:10.5px;height:10.5px;background:#f5ebec;"></div>
<div class="bl" style="left:175.0px;top:245.2px;width:6.9px;height:10.5px;background:#f6f3f5;"></div>
<div class="bl" style="left:215.4px;top:245.2px;width:10.5px;height:10.5px;background:#f5edee;"></div>
<div class="bl" style="left:225.5px;top:245.2px;width:10.5px;height:10.5px;background:#f5e7e8;"></div>
<div class="bl" style="left:235.6px;top:245.2px;width:10.5px;height:10.5px;background:#f5ebed;"></div>
<div class="bl" style="left:245.7px;top:245.2px;width:10.5px;height:10.5px;background:#f5e8e9;"></div>
<div class="bl" style="left:255.8px;top:245.2px;width:10.2px;height:10.5px;background:#f5eaeb;"></div>
<div class="bl" style="left:154.8px;top:255.3px;width:10.5px;height:10.5px;background:#fed6d7;"></div>
<div class="bl" style="left:164.9px;top:255.3px;width:10.5px;height:10.5px;background:#fed6d7;"></div>
<div class="bl" style="left:175.0px;top:255.3px;width:6.9px;height:10.5px;background:#fff0f0;"></div>
<div class="bl" style="left:215.4px;top:255.3px;width:10.5px;height:10.5px;background:#ffe3e4;"></div>
<div class="bl" style="left:225.5px;top:255.3px;width:10.5px;height:10.5px;background:#fec0c1;"></div>
<div class="bl" style="left:235.6px;top:255.3px;width:10.5px;height:10.5px;background:#fed9da;"></div>
<div class="bl" style="left:245.7px;top:255.3px;width:10.5px;height:10.5px;background:#fec6c7;"></div>
<div class="bl" style="left:255.8px;top:255.3px;width:10.2px;height:10.5px;background:#fed3d4;"></div>
<div class="bl" style="left:154.8px;top:265.4px;width:10.5px;height:10.5px;background:#ffe5e6;"></div>
<div class="bl" style="left:164.9px;top:265.4px;width:10.5px;height:10.5px;background:#ffe5e6;"></div>
<div class="bl" style="left:175.0px;top:265.4px;width:6.9px;height:10.5px;background:#fff5f5;"></div>
<div class="bl" style="left:215.4px;top:265.4px;width:10.5px;height:10.5px;background:#ffebec;"></div>
<div class="bl" style="left:225.5px;top:265.4px;width:10.5px;height:10.5px;background:#fedbdb;"></div>
<div class="bl" style="left:235.6px;top:265.4px;width:10.5px;height:10.5px;background:#ffe7e7;"></div>
<div class="bl" style="left:245.7px;top:265.4px;width:10.5px;height:10.5px;background:#fedede;"></div>
<div class="bl" style="left:255.8px;top:265.4px;width:10.2px;height:10.5px;background:#ffe4e4;"></div>
<div class="bl" style="left:154.8px;top:275.5px;width:10.5px;height:10.5px;background:#fedede;"></div>
<div class="bl" style="left:164.9px;top:275.5px;width:10.5px;height:10.5px;background:#fedede;"></div>
<div class="bl" style="left:175.0px;top:275.5px;width:6.9px;height:10.5px;background:#fff3f3;"></div>
<div class="bl" style="left:215.4px;top:275.5px;width:10.5px;height:10.5px;background:#ffe8e8;"></div>
<div class="bl" style="left:225.5px;top:275.5px;width:10.5px;height:10.5px;background:#fececf;"></div>
<div class="bl" style="left:235.6px;top:275.5px;width:10.5px;height:10.5px;background:#ffe0e1;"></div>
<div class="bl" style="left:245.7px;top:275.5px;width:10.5px;height:10.5px;background:#fed2d3;"></div>
<div class="bl" style="left:255.8px;top:275.5px;width:10.2px;height:10.5px;background:#fedcdc;"></div>
<div class="bl" style="left:154.8px;top:285.6px;width:10.5px;height:10.5px;background:#eaeaea;"></div>
<div class="bl" style="left:164.9px;top:285.6px;width:10.5px;height:10.5px;background:#eaeaea;"></div>
<div class="bl" style="left:175.0px;top:285.6px;width:6.9px;height:10.5px;background:#f8f8f8;"></div>
<div class="bl" style="left:215.4px;top:285.6px;width:10.5px;height:10.5px;background:#f2f2f2;"></div>
<div class="bl" style="left:225.5px;top:285.6px;width:10.5px;height:10.5px;background:#dedede;"></div>
<div class="bl" style="left:235.6px;top:285.6px;width:10.5px;height:10.5px;background:#ececec;"></div>
<div class="bl" style="left:245.7px;top:285.6px;width:10.5px;height:10.5px;background:#e1e1e1;"></div>
<div class="bl" style="left:255.8px;top:285.6px;width:10.2px;height:10.5px;background:#e9e9e9;"></div>
<div class="bl" style="left:154.8px;top:295.7px;width:10.5px;height:10.5px;background:#f1f1f1;"></div>
<div class="bl" style="left:164.9px;top:295.7px;width:10.5px;height:10.5px;background:#f1f1f1;"></div>
<div class="bl" style="left:175.0px;top:295.7px;width:6.9px;height:10.5px;background:#fafafa;"></div>
<div class="bl" style="left:215.4px;top:295.7px;width:10.5px;height:10.5px;background:#f5f5f5;"></div>
<div class="bl" style="left:225.5px;top:295.7px;width:10.5px;height:10.5px;background:#e9e9e9;"></div>
<div class="bl" style="left:235.6px;top:295.7px;width:10.5px;height:10.5px;background:#f2f2f2;"></div>
<div class="bl" style="left:245.7px;top:295.7px;width:10.5px;height:10.5px;background:#ebebeb;"></div>
<div class="bl" style="left:255.8px;top:295.7px;width:10.2px;height:10.5px;background:#f0f0f0;"></div>
<div class="bl" style="left:154.8px;top:305.8px;width:10.5px;height:10.5px;background:#e4e4e4;"></div>
<div class="bl" style="left:164.9px;top:305.8px;width:10.5px;height:10.5px;background:#e4e4e4;"></div>
<div class="bl" style="left:175.0px;top:305.8px;width:6.9px;height:10.5px;background:#f6f6f6;"></div>
<div class="bl" style="left:215.4px;top:305.8px;width:10.5px;height:10.5px;background:#efefef;"></div>
<div class="bl" style="left:225.5px;top:305.8px;width:10.5px;height:10.5px;background:#d3d3d3;"></div>
<div class="bl" style="left:235.6px;top:305.8px;width:10.5px;height:10.5px;background:#e7e7e7;"></div>
<div class="bl" style="left:245.7px;top:305.8px;width:10.5px;height:10.5px;background:#d8d8d8;"></div>
<div class="bl" style="left:255.8px;top:305.8px;width:10.2px;height:10.5px;background:#e2e2e2;"></div>
<div class="bl" style="left:154.8px;top:315.9px;width:10.5px;height:10.5px;background:#f7f7f7;"></div>
<div class="bl" style="left:164.9px;top:315.9px;width:10.5px;height:10.5px;background:#f7f7f7;"></div>
<div class="bl" style="left:175.0px;top:315.9px;width:6.9px;height:10.5px;background:#fcfcfc;"></div>
<div class="bl" style="left:215.4px;top:315.9px;width:10.5px;height:10.5px;background:#f8f8f8;"></div>
<div class="bl" style="left:225.5px;top:315.9px;width:10.5px;height:10.5px;background:#f4f4f4;"></div>
<div class="bl" style="left:235.6px;top:315.9px;width:10.5px;height:10.5px;background:#f7f7f7;"></div>
<div class="bl" style="left:245.7px;top:315.9px;width:10.5px;height:10.5px;background:#f5f5f5;"></div>
<div class="bl" style="left:255.8px;top:315.9px;width:10.2px;height:10.5px;background:#f6f6f6;"></div>
<div class="bl" style="left:154.8px;top:326.0px;width:10.5px;height:10.5px;background:#e1e1e1;"></div>
<div class="bl" style="left:164.9px;top:326.0px;width:10.5px;height:10.5px;background:#e1e1e1;"></div>
<div class="bl" style="left:175.0px;top:326.0px;width:6.9px;height:10.5px;background:#f5f5f5;"></div>
<div class="bl" style="left:215.4px;top:326.0px;width:10.5px;height:10.5px;background:#ededed;"></div>
<div class="bl" style="left:225.5px;top:326.0px;width:10.5px;height:10.5px;background:#cdcdcd;"></div>
<div class="bl" style="left:235.6px;top:326.0px;width:10.5px;height:10.5px;background:#e3e3e3;"></div>
<div class="bl" style="left:245.7px;top:326.0px;width:10.5px;height:10.5px;background:#d2d2d2;"></div>
<div class="bl" style="left:255.8px;top:326.0px;width:10.2px;height:10.5px;background:#dedede;"></div>
<div class="bl" style="left:154.8px;top:336.1px;width:10.5px;height:10.5px;background:#fafafa;"></div>
<div class="bl" style="left:164.9px;top:336.1px;width:10.5px;height:10.5px;background:#fafafa;"></div>
<div class="bl" style="left:175.0px;top:336.1px;width:6.9px;height:10.5px;background:#fdfdfd;"></div>
<div class="bl" style="left:215.4px;top:336.1px;width:10.5px;height:10.5px;background:#fafafa;"></div>
<div class="bl" style="left:225.5px;top:336.1px;width:10.5px;height:10.5px;background:#fafafa;"></div>
<div class="bl" style="left:235.6px;top:336.1px;width:10.5px;height:10.5px;background:#fafafa;"></div>
<div class="bl" style="left:245.7px;top:336.1px;width:10.5px;height:10.5px;background:#fafafa;"></div>
<div class="bl" style="left:255.8px;top:336.1px;width:10.2px;height:10.5px;background:#fafafa;"></div>
<div class="bl" style="left:154.8px;top:346.2px;width:10.5px;height:10.5px;background:#e1e1e1;"></div>
<div class="bl" style="left:164.9px;top:346.2px;width:10.5px;height:10.5px;background:#e1e1e1;"></div>
<div class="bl" style="left:175.0px;top:346.2px;width:6.9px;height:10.5px;background:#f5f5f5;"></div>
<div class="bl" style="left:215.4px;top:346.2px;width:10.5px;height:10.5px;background:#ededed;"></div>
<div class="bl" style="left:225.5px;top:346.2px;width:10.5px;height:10.5px;background:#cdcdcd;"></div>
<div class="bl" style="left:235.6px;top:346.2px;width:10.5px;height:10.5px;background:#e3e3e3;"></div>
<div class="bl" style="left:245.7px;top:346.2px;width:10.5px;height:10.5px;background:#d2d2d2;"></div>
<div class="bl" style="left:255.8px;top:346.2px;width:10.2px;height:10.5px;background:#dedede;"></div>
<div class="bl" style="left:154.8px;top:356.3px;width:10.5px;height:10.5px;background:#f6f6f6;"></div>
<div class="bl" style="left:164.9px;top:356.3px;width:10.5px;height:10.5px;background:#f6f6f6;"></div>
<div class="bl" style="left:175.0px;top:356.3px;width:6.9px;height:10.5px;background:#fcfcfc;"></div>
<div class="bl" style="left:215.4px;top:356.3px;width:10.5px;height:10.5px;background:#f8f8f8;"></div>
<div class="bl" style="left:225.5px;top:356.3px;width:10.5px;height:10.5px;background:#f3f3f3;"></div>
<div class="bl" style="left:235.6px;top:356.3px;width:10.5px;height:10.5px;background:#f7f7f7;"></div>
<div class="bl" style="left:245.7px;top:356.3px;width:10.5px;height:10.5px;background:#f4f4f4;"></div>
<div class="bl" style="left:255.8px;top:356.3px;width:10.2px;height:10.5px;background:#f6f6f6;"></div>
<div class="bl" style="left:154.8px;top:366.4px;width:10.5px;height:10.5px;background:#e5e5e5;"></div>
<div class="bl" style="left:164.9px;top:366.4px;width:10.5px;height:10.5px;background:#e5e5e5;"></div>
<div class="bl" style="left:175.0px;top:366.4px;width:6.9px;height:10.5px;background:#f6f6f6;"></div>
<div class="bl" style="left:215.4px;top:366.4px;width:10.5px;height:10.5px;background:#efefef;"></div>
<div class="bl" style="left:225.5px;top:366.4px;width:10.5px;height:10.5px;background:#d4d4d4;"></div>
<div class="bl" style="left:235.6px;top:366.4px;width:10.5px;height:10.5px;background:#e7e7e7;"></div>
<div class="bl" style="left:245.7px;top:366.4px;width:10.5px;height:10.5px;background:#d8d8d8;"></div>
<div class="bl" style="left:255.8px;top:366.4px;width:10.2px;height:10.5px;background:#e2e2e2;"></div>
<div class="bl" style="left:154.8px;top:376.5px;width:10.5px;height:10.5px;background:#fde7e7;"></div>
<div class="bl" style="left:164.9px;top:376.5px;width:10.5px;height:10.5px;background:#fde7e7;"></div>
<div class="bl" style="left:175.0px;top:376.5px;width:6.9px;height:10.5px;background:#fef6f6;"></div>
<div class="bl" style="left:215.4px;top:376.5px;width:10.5px;height:10.5px;background:#fdeded;"></div>
<div class="bl" style="left:225.5px;top:376.5px;width:10.5px;height:10.5px;background:#fddcdd;"></div>
<div class="bl" style="left:235.6px;top:376.5px;width:10.5px;height:10.5px;background:#fde8e8;"></div>
<div class="bl" style="left:245.7px;top:376.5px;width:10.5px;height:10.5px;background:#fddfe0;"></div>
<div class="bl" style="left:255.8px;top:376.5px;width:10.2px;height:10.5px;background:#fde5e6;"></div>
<div class="bl" style="left:154.8px;top:386.6px;width:10.5px;height:10.5px;background:#fedede;"></div>
<div class="bl" style="left:164.9px;top:386.6px;width:10.5px;height:10.5px;background:#fedede;"></div>
<div class="bl" style="left:175.0px;top:386.6px;width:6.9px;height:10.5px;background:#fff3f3;"></div>
<div class="bl" style="left:215.4px;top:386.6px;width:10.5px;height:10.5px;background:#ffe8e8;"></div>
<div class="bl" style="left:225.5px;top:386.6px;width:10.5px;height:10.5px;background:#fececf;"></div>
<div class="bl" style="left:235.6px;top:386.6px;width:10.5px;height:10.5px;background:#ffe0e0;"></div>
<div class="bl" style="left:245.7px;top:386.6px;width:10.5px;height:10.5px;background:#fed2d3;"></div>
<div class="bl" style="left:255.8px;top:386.6px;width:10.2px;height:10.5px;background:#fedcdc;"></div>
<div class="bl" style="left:154.8px;top:396.7px;width:10.5px;height:10.5px;background:#feddde;"></div>
<div class="bl" style="left:164.9px;top:396.7px;width:10.5px;height:10.5px;background:#feddde;"></div>
<div class="bl" style="left:175.0px;top:396.7px;width:6.9px;height:10.5px;background:#fff3f3;"></div>
<div class="bl" style="left:215.4px;top:396.7px;width:10.5px;height:10.5px;background:#ffe7e8;"></div>
<div class="bl" style="left:225.5px;top:396.7px;width:10.5px;height:10.5px;background:#fecdce;"></div>
<div class="bl" style="left:235.6px;top:396.7px;width:10.5px;height:10.5px;background:#fee0e0;"></div>
<div class="bl" style="left:245.7px;top:396.7px;width:10.5px;height:10.5px;background:#fed1d2;"></div>
<div class="bl" style="left:255.8px;top:396.7px;width:10.2px;height:10.5px;background:#fedbdc;"></div>
<div class="bl" style="left:154.8px;top:406.8px;width:10.5px;height:10.5px;background:#fde7e7;"></div>
<div class="bl" style="left:164.9px;top:406.8px;width:10.5px;height:10.5px;background:#fde7e7;"></div>
<div class="bl" style="left:175.0px;top:406.8px;width:6.9px;height:10.5px;background:#fef6f6;"></div>
<div class="bl" style="left:215.4px;top:406.8px;width:10.5px;height:10.5px;background:#fdeded;"></div>
<div class="bl" style="left:225.5px;top:406.8px;width:10.5px;height:10.5px;background:#fddddd;"></div>
<div class="bl" style="left:235.6px;top:406.8px;width:10.5px;height:10.5px;background:#fde8e9;"></div>
<div class="bl" style="left:245.7px;top:406.8px;width:10.5px;height:10.5px;background:#fde0e0;"></div>
<div class="bl" style="left:255.8px;top:406.8px;width:10.2px;height:10.5px;background:#fde6e6;"></div>
<div class="bl" style="left:154.8px;top:416.9px;width:10.5px;height:10.5px;background:#e4e4e4;"></div>
<div class="bl" style="left:164.9px;top:416.9px;width:10.5px;height:10.5px;background:#e4e4e4;"></div>
<div class="bl" style="left:175.0px;top:416.9px;width:6.9px;height:10.5px;background:#f6f6f6;"></div>
<div class="bl" style="left:215.4px;top:416.9px;width:10.5px;height:10.5px;background:#efefef;"></div>
<div class="bl" style="left:225.5px;top:416.9px;width:10.5px;height:10.5px;background:#d3d3d3;"></div>
<div class="bl" style="left:235.6px;top:416.9px;width:10.5px;height:10.5px;background:#e7e7e7;"></div>
<div class="bl" style="left:245.7px;top:416.9px;width:10.5px;height:10.5px;background:#d8d8d8;"></div>
<div class="bl" style="left:255.8px;top:416.9px;width:10.2px;height:10.5px;background:#e2e2e2;"></div>
<div class="bl" style="left:154.8px;top:427.0px;width:10.5px;height:10.5px;background:#f7f7f7;"></div>
<div class="bl" style="left:164.9px;top:427.0px;width:10.5px;height:10.5px;background:#f7f7f7;"></div>
<div class="bl" style="left:175.0px;top:427.0px;width:6.9px;height:10.5px;background:#fcfcfc;"></div>
<div class="bl" style="left:215.4px;top:427.0px;width:10.5px;height:10.5px;background:#f8f8f8;"></div>
<div class="bl" style="left:225.5px;top:427.0px;width:10.5px;height:10.5px;background:#f4f4f4;"></div>
<div class="bl" style="left:235.6px;top:427.0px;width:10.5px;height:10.5px;background:#f7f7f7;"></div>
<div class="bl" style="left:245.7px;top:427.0px;width:10.5px;height:10.5px;background:#f4f4f4;"></div>
<div class="bl" style="left:255.8px;top:427.0px;width:10.2px;height:10.5px;background:#f6f6f6;"></div>
<div class="bl" style="left:154.8px;top:437.1px;width:10.5px;height:10.5px;background:#e1e1e1;"></div>
<div class="bl" style="left:164.9px;top:437.1px;width:10.5px;height:10.5px;background:#e1e1e1;"></div>
<div class="bl" style="left:175.0px;top:437.1px;width:6.9px;height:10.5px;background:#f5f5f5;"></div>
<div class="bl" style="left:215.4px;top:437.1px;width:10.5px;height:10.5px;background:#ededed;"></div>
<div class="bl" style="left:225.5px;top:437.1px;width:10.5px;height:10.5px;background:#cdcdcd;"></div>
<div class="bl" style="left:235.6px;top:437.1px;width:10.5px;height:10.5px;background:#e3e3e3;"></div>
<div class="bl" style="left:245.7px;top:437.1px;width:10.5px;height:10.5px;background:#d2d2d2;"></div>
<div class="bl" style="left:255.8px;top:437.1px;width:10.2px;height:10.5px;background:#dedede;"></div>
<div class="bl" style="left:154.8px;top:447.2px;width:10.5px;height:10.5px;background:#fafafa;"></div>
<div class="bl" style="left:164.9px;top:447.2px;width:10.5px;height:10.5px;background:#fafafa;"></div>
<div class="bl" style="left:175.0px;top:447.2px;width:6.9px;height:10.5px;background:#fdfdfd;"></div>
<div class="bl" style="left:215.4px;top:447.2px;width:10.5px;height:10.5px;background:#fafafa;"></div>
<div class="bl" style="left:225.5px;top:447.2px;width:10.5px;height:10.5px;background:#fafafa;"></div>
<div class="bl" style="left:235.6px;top:447.2px;width:10.5px;height:10.5px;background:#fafafa;"></div>
<div class="bl" style="left:245.7px;top:447.2px;width:10.5px;height:10.5px;background:#fafafa;"></div>
<div class="bl" style="left:255.8px;top:447.2px;width:10.2px;height:10.5px;background:#fafafa;"></div>
<div class="bl" style="left:154.8px;top:457.3px;width:10.5px;height:10.5px;background:#e1e1e1;"></div>
<div class="bl" style="left:164.9px;top:457.3px;width:10.5px;height:10.5px;background:#e1e1e1;"></div>
<div class="bl" style="left:175.0px;top:457.3px;width:6.9px;height:10.5px;background:#f5f5f5;"></div>
<div class="bl" style="left:215.4px;top:457.3px;width:10.5px;height:10.5px;background:#ededed;"></div>
<div class="bl" style="left:225.5px;top:457.3px;width:10.5px;height:10.5px;background:#cdcdcd;"></div>
<div class="bl" style="left:235.6px;top:457.3px;width:10.5px;height:10.5px;background:#e3e3e3;"></div>
<div class="bl" style="left:245.7px;top:457.3px;width:10.5px;height:10.5px;background:#d2d2d2;"></div>
<div class="bl" style="left:255.8px;top:457.3px;width:10.2px;height:10.5px;background:#dedede;"></div>
<div class="bl" style="left:154.8px;top:467.4px;width:10.5px;height:3.2px;background:#fafafa;"></div>
<div class="bl" style="left:164.9px;top:467.4px;width:10.5px;height:3.2px;background:#fafafa;"></div>
<div class="bl" style="left:175.0px;top:467.4px;width:6.9px;height:3.2px;background:#fdfdfd;"></div>
<div class="bl" style="left:215.4px;top:467.4px;width:10.5px;height:3.2px;background:#fafafa;"></div>
<div class="bl" style="left:225.5px;top:467.4px;width:10.5px;height:3.2px;background:#fafafa;"></div>
<div class="bl" style="left:235.6px;top:467.4px;width:10.5px;height:3.2px;background:#fafafa;"></div>
<div class="bl" style="left:245.7px;top:467.4px;width:10.5px;height:3.2px;background:#fafafa;"></div>
<div class="bl" style="left:255.8px;top:467.4px;width:10.2px;height:3.2px;background:#fafafa;"></div>
</div>
<div class="c" style="left:176.4px;top:359.76px;color:#8a8a8a">)</div>
<div class="c" style="left:176.4px;top:396.80px;color:#f4777b">)</div>
<div class="c" style="left:176.4px;top:415.32px;color:#8a8a8a">)</div>
<div class="c" style="left:176.4px;top:433.84px;color:#8a8a8a">)</div>
<div class="c" style="left:176.4px;top:452.36px;color:#8a8a8a">)</div>
<div class="c" style="left:263.2px;top:396.80px;color:#f4777b">)</div>
<div class="c" style="left:263.2px;top:415.32px;color:#8a8a8a">)</div>
<div class="c" style="left:263.2px;top:433.84px;color:#8a8a8a">)</div>
<div class="abs" style="left:112px;top:502.6px;width:959.6px;height:1px;background:#e4e4e4"></div>
<svg class="abs" style="left:122.6px;top:509.8px" width="8" height="8" viewBox="0 0 8 8"><path d="M3.6 .8L.8 4L3.6 7.2M7 .8L4.2 4L7 7.2" fill="none" stroke="#c4c4c4" stroke-width=".8"/></svg>
<svg class="abs" style="left:145.6px;top:509.8px" width="6" height="8" viewBox="0 0 6 8"><path d="M4.8 .8L1.2 4L4.8 7.2" fill="none" stroke="#c4c4c4" stroke-width=".8"/></svg>
<div class="abs" style="left:162px;top:508.6px;width:.8px;height:9.4px;background:#dedede"></div>
<div class="pg" style="left:169px;top:507.6px">第</div>
<div class="abs" style="left:184.2px;top:507px;width:27.6px;height:13.6px;border:1px solid #d9d9d9;background:#fff"></div>
<div class="pg" style="left:189.6px;top:507.8px">1</div>
<div class="pg" style="left:215.5px;top:507.6px">页，共10页</div>
<div class="abs" style="left:260.2px;top:508.6px;width:.8px;height:9.4px;background:#dedede"></div>
<svg class="abs" style="left:271.6px;top:509.8px" width="6" height="8" viewBox="0 0 6 8"><path d="M1.2 .8L4.8 4L1.2 7.2" fill="none" stroke="#7a7a7a" stroke-width=".9"/></svg>
<svg class="abs" style="left:292.8px;top:509.8px" width="8" height="8" viewBox="0 0 8 8"><path d="M1 .8L3.8 4L1 7.2M4.4 .8L7.2 4L4.4 7.2" fill="none" stroke="#7a7a7a" stroke-width=".9"/></svg>
<div class="abs" style="left:310.8px;top:508.6px;width:.8px;height:9.4px;background:#dedede"></div>
<svg class="abs" style="left:320.2px;top:509.4px" width="8.6" height="8.6" viewBox="0 0 8.6 8.6"><path d="M7.2 3.2A3.1 3.1 0 0 0 1.4 3.2M1.4 5.4A3.1 3.1 0 0 0 7.2 5.4" fill="none" stroke="#5c5c5c" stroke-width="1.25"/><path d="M8.1 .9V3.7H5.3Z M.5 7.7V4.9H3.3Z" fill="#5c5c5c"/></svg>
<div class="pg" style="left:961.8px;top:507.6px">当前显示 1 - 20 项，共 184 项</div>
<div class="abs" style="left:1071.2px;top:79.6px;width:.9px;height:444px;background:#d0d0d0"></div>
<div class="abs" style="left:111.5px;top:523.4px;width:960.5px;height:.9px;background:#d4d4d4"></div>
</div></body></html>
